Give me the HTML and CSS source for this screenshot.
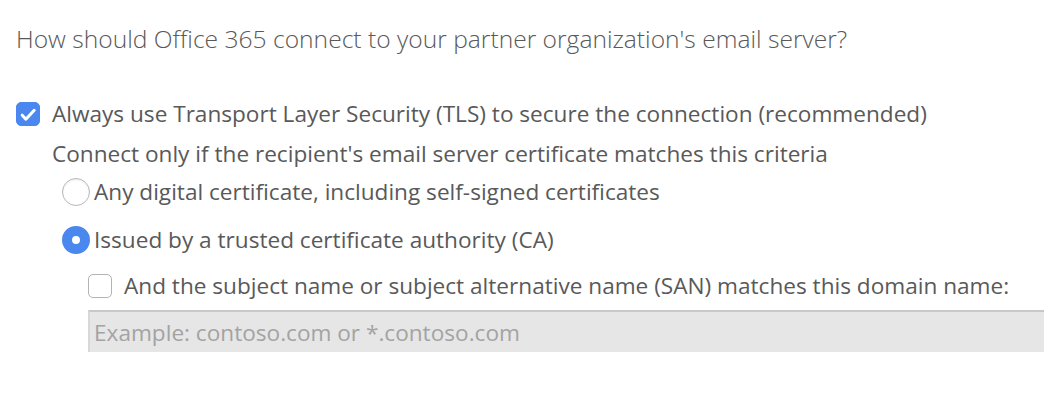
FILE: index.html
```html
<!DOCTYPE html>
<html lang="en">
<head>
    <meta charset="UTF-8">
    <meta name="viewport" content="width=device-width, initial-scale=1.0">
    <title>Connector security</title>
    <link rel="stylesheet" href="styles.css">
</head>
<body>
    <div class="page">
        <h2 class="question">How should Office 365 connect to your partner organization's email server?</h2>

        <label class="check-row tls-row">
            <span class="checkbox checked">
                <svg viewBox="0 0 24 24" width="24" height="24"><path d="M6.2 13.2l3.7 4 8.3-8.9" fill="none" stroke="#fff" stroke-width="3" stroke-linecap="round" stroke-linejoin="round"/></svg>
            </span>
            <span class="label-text">Always use Transport Layer Security (TLS) to secure the connection (recommended)</span>
        </label>

        <div class="options">
            <div class="hint">Connect only if the recipient's email server certificate matches this criteria</div>

            <label class="radio-row">
                <span class="radio"></span>
                <span class="label-text">Any digital certificate, including self-signed certificates</span>
            </label>

            <label class="radio-row">
                <span class="radio selected"></span>
                <span class="label-text">Issued by a trusted certificate authority (CA)</span>
            </label>

            <div class="san">
                <label class="check-row san-row">
                    <span class="checkbox"></span>
                    <span class="label-text">And the subject name or subject alternative name (SAN) matches this domain name:</span>
                </label>
                <input class="domain-input" type="text" placeholder="Example: contoso.com or *.contoso.com" disabled>
            </div>
        </div>
    </div>
</body>
</html>
```

FILE: styles.css
```css
:root {
    --text: #595959;
    --blue: #4a87ee;
    --border: #c8c8c8;
    --field: #e6e6e6;
}

body {
    margin: 0;
    font-family: 'Open Sans', 'Segoe UI', sans-serif;
    color: var(--text);
    background: white;
    overflow: hidden;
}

.page {
    padding: 22px 0 0 16px;
}

.question {
    font-size: 24.6px;
    font-weight: 300;
    margin: 0 0 44px;
    line-height: 34px;
}

.label-text {
    font-size: 22.6px;
    line-height: 28px;
}

.check-row,
.radio-row {
    display: flex;
    align-items: center;
}

.checkbox {
    width: 24px;
    height: 24px;
    box-sizing: border-box;
    border: 1px solid #b4b4b4;
    border-radius: 5px;
    background: white;
    flex-shrink: 0;
    display: flex;
}

.checkbox.checked {
    background: var(--blue);
    border-color: var(--blue);
}

.checkbox svg {
    margin: -1px;
}

.tls-row .checkbox {
    margin-right: 12px;
}

.options {
    padding-left: 36px;
}

.hint {
    font-size: 22.6px;
    line-height: 28px;
    margin: 12px 0 10px;
}

.radio-row {
    margin-left: 10px;
    margin-bottom: 20px;
}

.radio {
    width: 28px;
    height: 28px;
    box-sizing: border-box;
    border: 1px solid #b8b8b8;
    border-radius: 50%;
    background: white;
    box-shadow: inset 0 1px 2px rgba(0, 0, 0, 0.08);
    margin-right: 4px;
    flex-shrink: 0;
}

.radio.selected {
    border: 10px solid var(--blue);
    box-shadow: none;
}

.san {
    margin-left: 36px;
}

.san-row {
    margin-top: -2px;
}

.san-row .checkbox {
    margin-right: 12px;
}

.domain-input {
    display: block;
    width: calc(100% + 20px);
    box-sizing: border-box;
    height: 42px;
    margin-top: 10px;
    padding: 0 4px;
    border: none;
    border-top: 2px solid var(--border);
    border-left: 2px solid #d8d8d8;
    background: var(--field);
    font-family: inherit;
    font-size: 22.6px;
    color: var(--text);
}

.domain-input::placeholder {
    color: #a3a3a3;
}
```
